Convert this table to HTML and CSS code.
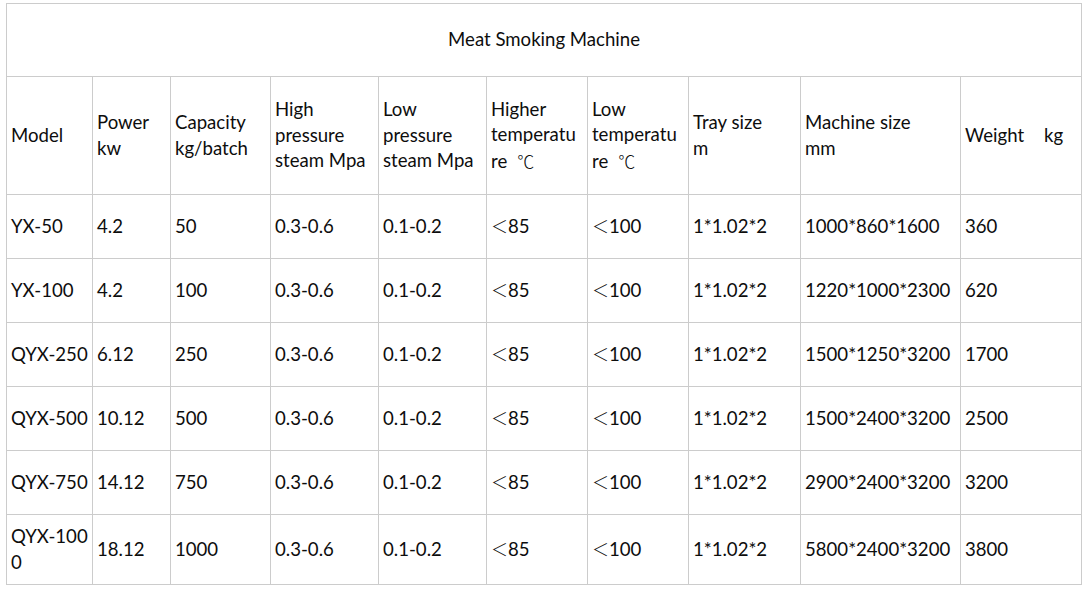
FILE: index.html
```html
<!DOCTYPE html>
<html>
<head>
<meta charset="utf-8">
<link rel="stylesheet" href="styles.css">
</head>
<body>
<table class="spec">
  <colgroup>
    <col class="c-model"><col class="c-power"><col class="c-cap"><col class="c-hp"><col class="c-lp">
    <col class="c-ht"><col class="c-lt"><col class="c-tray"><col class="c-mach"><col class="c-weight">
  </colgroup>
  <tr class="title-row"><td colspan="10" class="title">Meat Smoking Machine</td></tr>
  <tr class="head-row">
    <td>Model</td>
    <td>Power<br>kw</td>
    <td>Capacity<br>kg/batch</td>
    <td>High<br>pressure<br>steam Mpa</td>
    <td>Low<br>pressure<br>steam Mpa</td>
    <td>Higher<br>temperatu<br>re<span class="deg">℃</span></td>
    <td>Low<br>temperatu<br>re<span class="deg">℃</span></td>
    <td>Tray size<br>m</td>
    <td>Machine size<br>mm</td>
    <td>Weight<span class="gap"></span>kg</td>
  </tr>
  <tr class="row"><td>YX-50</td><td>4.2</td><td>50</td><td>0.3-0.6</td><td>0.1-0.2</td><td><span class="lt">＜</span>85</td><td><span class="lt">＜</span>100</td><td>1*1.02*2</td><td>1000*860*1600</td><td>360</td></tr>
  <tr class="row"><td>YX-100</td><td>4.2</td><td>100</td><td>0.3-0.6</td><td>0.1-0.2</td><td><span class="lt">＜</span>85</td><td><span class="lt">＜</span>100</td><td>1*1.02*2</td><td>1220*1000*2300</td><td>620</td></tr>
  <tr class="row"><td>QYX-250</td><td>6.12</td><td>250</td><td>0.3-0.6</td><td>0.1-0.2</td><td><span class="lt">＜</span>85</td><td><span class="lt">＜</span>100</td><td>1*1.02*2</td><td>1500*1250*3200</td><td>1700</td></tr>
  <tr class="row"><td>QYX-500</td><td>10.12</td><td>500</td><td>0.3-0.6</td><td>0.1-0.2</td><td><span class="lt">＜</span>85</td><td><span class="lt">＜</span>100</td><td>1*1.02*2</td><td>1500*2400*3200</td><td>2500</td></tr>
  <tr class="row"><td>QYX-750</td><td>14.12</td><td>750</td><td>0.3-0.6</td><td>0.1-0.2</td><td><span class="lt">＜</span>85</td><td><span class="lt">＜</span>100</td><td>1*1.02*2</td><td>2900*2400*3200</td><td>3200</td></tr>
  <tr class="row last"><td>QYX-100<br>0</td><td>18.12</td><td>1000</td><td>0.3-0.6</td><td>0.1-0.2</td><td><span class="lt">＜</span>85</td><td><span class="lt">＜</span>100</td><td>1*1.02*2</td><td>5800*2400*3200</td><td>3800</td></tr>
</table>
</body>
</html>
```

FILE: styles.css
```css
html, body {
  margin: 0;
  padding: 0;
  background: #ffffff;
}
body {
  padding: 3px 0 0 6px;
  font-family: "Lato", "Noto Sans", sans-serif;
  font-size: 18.6px;
  color: #0d0d0d;
}
.spec {
  border-collapse: collapse;
  table-layout: fixed;
  width: 1076px;
}
.spec td {
  border: 1px solid #cccccc;
  padding: 0 1px 0 4px;
  vertical-align: middle;
  line-height: 25.5px;
  white-space: nowrap;
  overflow: hidden;
}
.c-model { width: 86px; }
.c-power { width: 78px; }
.c-cap { width: 100px; }
.c-hp { width: 108px; }
.c-lp { width: 108px; }
.c-ht { width: 101px; }
.c-lt { width: 101px; }
.c-tray { width: 112px; }
.c-mach { width: 160px; }
.c-weight { width: 121px; }
.title-row td { height: 72px; }
.spec td.title { text-align: center; padding: 0; }
.head-row td { height: 117px; }
.row td { height: 63px; }
.row.last td { height: 69px; }
.lt {
  font-family: "Noto Sans CJK SC", sans-serif;
  font-size: 17px;
  font-weight: 300;
}
.deg {
  font-family: "Noto Sans CJK SC", sans-serif;
  font-size: 17px;
  font-weight: 300;
  margin-left: 10px;
}
.gap {
  display: inline-block;
  width: 20px;
}
```
